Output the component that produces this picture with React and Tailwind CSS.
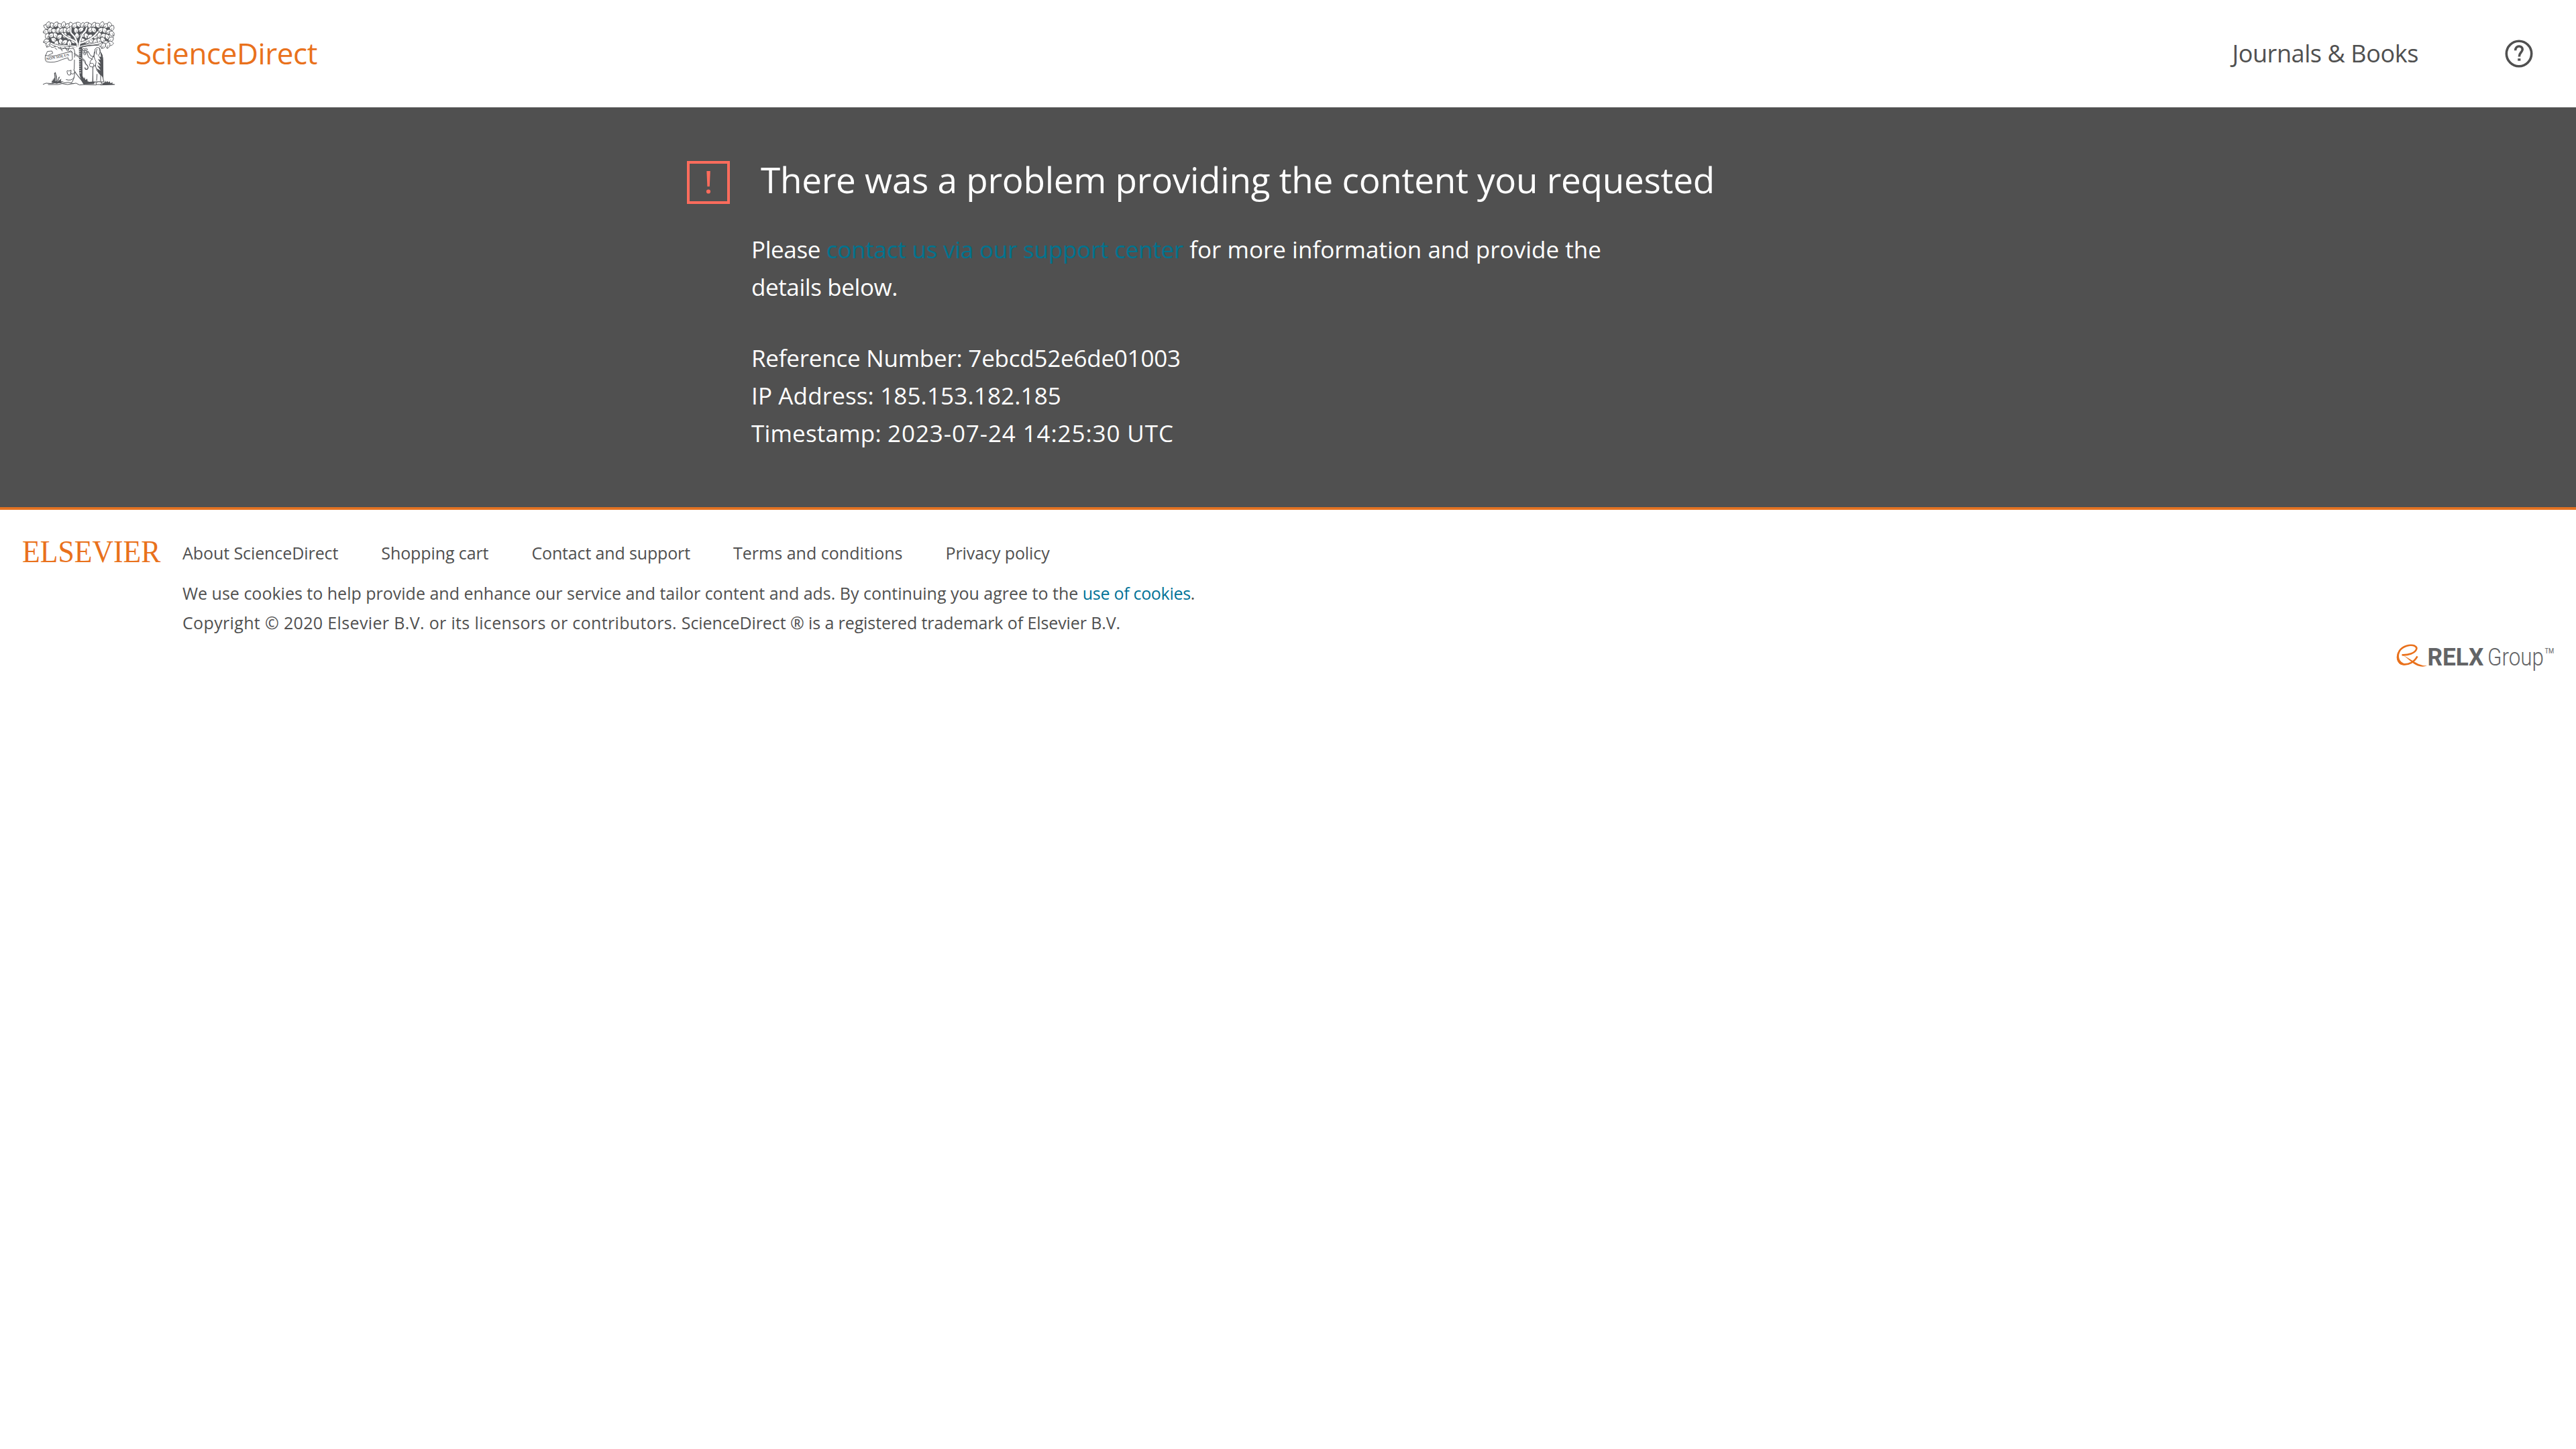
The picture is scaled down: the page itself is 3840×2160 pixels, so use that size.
const INK = '#54565a';

// Leaves of the canopy: x, y, rotation in degrees
const leaves = [
  [58, 60, -60], [66, 50, 20], [84, 54, -25], [100, 50, 35], [118, 56, -40], [134, 50, 15], [152, 56, 50], [168, 52, -20], [184, 54, 35], [202, 50, -45], [220, 54, 10], [236, 50, 50], [252, 56, -30], [270, 52, 25], [288, 54, -50], [306, 50, 20], [324, 56, 60], [340, 52, -15], [350, 66, 30],
  [56, 82, 80], [74, 74, 30], [92, 78, -60], [110, 76, 10], [126, 76, 50], [142, 76, -20], [158, 74, 40], [190, 76, -10], [212, 72, 60], [254, 74, 30], [270, 74, -40], [300, 74, 50], [318, 76, -20], [336, 82, 60], [350, 90, -40],
  [62, 102, 10], [80, 98, 60], [98, 98, -30], [116, 104, 50], [140, 98, 10], [158, 108, -40], [194, 100, 0], [218, 98, 60], [236, 100, -20], [252, 104, 40], [276, 104, -50], [294, 98, 10], [312, 100, 60], [330, 104, -30], [346, 116, 50],
  [58, 124, 70], [66, 138, 30], [90, 118, -60], [102, 134, 20], [122, 126, -20], [140, 128, 50], [160, 134, 0], [178, 124, -50], [222, 122, -30], [240, 124, 40], [258, 122, -60], [276, 126, 20], [294, 122, -30], [310, 118, -40], [322, 132, 70], [344, 134, 90], [332, 142, 10], [302, 140, -60], [84, 142, -70], [312, 144, 30],
];

const branches = [
  'M198 160C197 130 190 106 172 92C160 84 170 70 166 62',
  'M203 154C206 120 212 95 232 80L238 64',
  'M196 134C170 108 150 116 128 88',
  'M206 134C235 126 268 110 288 82',
  'M184 155C145 150 110 152 78 134',
  'M212 148C240 138 270 142 300 130',
];

function TreeLogo() {
  return (
    <svg viewBox="42 36 324 288" className="h-24 w-[108px] shrink-0" fill="none" strokeLinecap="round" strokeLinejoin="round">
      <path d="M60 56L90 48L180 46L280 48L342 56L346 80L334 110L340 134L310 140L280 128L250 130L210 146L150 142L110 138L70 136L62 115L64 82Z" fill={INK} />
      {leaves.map(([x, y, r], i) => (
        <g key={i} transform={`translate(${x} ${y}) rotate(${r})`}>
          <path d="M0 14C-14 7-12-7 0-14C12-7 14 7 0 14Z" fill="#fff" stroke={INK} strokeWidth="2.6" />
          <path d="M0 12L1 1" stroke={INK} strokeWidth="2" />
        </g>
      ))}
      <g stroke={INK} strokeWidth="10">
        {branches.map((d) => <path key={d} d={d} />)}
      </g>
      <g stroke="#fff" strokeWidth="6.4">
        {branches.map((d) => <path key={d} d={d} />)}
      </g>
      {/* trunk */}
      <path d="M180 152C188 185 183 225 184 255C180 285 180 302 172 313L228 316C214 292 204 280 203 250L203 150Z" fill="#fff" />
      <path d="M176 154Q186 162 184 184L183 196M183 208L182 250M184 262Q184 296 168 312" stroke={INK} strokeWidth="3" />
      <path d="M203 154Q212 148 218 152L218 190L219 280Q228 302 250 306L276 304L270 316L224 318Q206 290 204 262Z" fill={INK} />
      <path d="M202 162H210M202 170H210M202 178H210M202 186H210M202 196H210M202 206H210M202 216H210M202 226H210M202 236H210M202 246H210M203 256H211M204 266H212" stroke="#fff" strokeWidth="2.6" />
      <path d="M214 150Q250 140 288 142" stroke={INK} strokeWidth="4" />
      {/* vine */}
      <path d="M183 180C198 194 226 200 231 220C232 230 244 230 244 242C242 254 230 252 230 243" stroke={INK} strokeWidth="4" />
      <path d="M184 181C198 195 226 201 231 218" stroke={INK} strokeWidth="6.5" />
      <path d="M184 181C198 195 226 201 231 218" stroke="#fff" strokeWidth="2.4" />
      <path d="M180 252C192 276 212 292 226 316" stroke={INK} strokeWidth="3.2" />
      <path d="M184 262C184 272 170 274 166 266M166 274Q152 282 150 262Q148 252 158 258L168 254L166 272" stroke={INK} strokeWidth="3" />
      <path d="M182 286Q170 304 146 296" stroke={INK} strokeWidth="3" />
      {/* grapes */}
      <g stroke={INK} strokeWidth="2.6" fill="#fff">
        <circle cx="225" cy="162" r="5" /><circle cx="235" cy="161" r="5" /><circle cx="222" cy="172" r="5" />
        <circle cx="232" cy="171" r="5" /><circle cx="239" cy="172" r="4" /><circle cx="229" cy="181" r="4.5" />
      </g>
      {/* old man */}
      <path d="M276 158Q284 148 294 154L298 170Q310 184 310 206L311 290L314 306H266L265 240L252 218L262 202L272 184Z" fill="#fff" stroke={INK} strokeWidth="3" />
      <path d="M298 170Q310 182 311 210L312 296Q308 280 292 268L282 246L300 256L284 232L300 240L286 218L300 224L288 204L300 208L292 192L302 194Z" fill={INK} />
      <path d="M238 174L246 196L264 206M244 170L256 190L270 194M272 172Q266 194 280 216L276 236M284 160Q276 176 284 184M254 224L264 240L276 232L284 256L300 276V302M266 240L264 306M284 272L282 300M296 156Q302 172 290 190" stroke={INK} strokeWidth="3" />
      <path d="M250 226Q262 218 270 228L266 240L254 238Z" fill="#fff" stroke={INK} strokeWidth="2.6" />
      <path d="M280 308Q292 302 306 308L302 318H282Z" fill="#fff" stroke={INK} strokeWidth="3" />
      {/* foliage over the banner */}
      <path d="M110 154L124 160L140 156L156 160M120 150L128 168M140 150L150 166M160 152L154 168M96 154L104 162" stroke={INK} strokeWidth="3" />
      {/* banner */}
      <path d="M54 188Q86 196 122 182L158 172L172 172L174 206Q166 214 156 208L154 198L128 206Q92 224 58 216Q48 206 54 188ZM54 188L62 170L82 168L86 178L68 186M174 174L166 166L156 174" fill="#fff" stroke={INK} strokeWidth="2.8" />
      <text x="58" y="210" fontSize="17" fontWeight="700" fontFamily="Liberation Serif, serif" fill={INK} textLength="104" lengthAdjust="spacingAndGlyphs" transform="rotate(-11 58 210)">
        NON SOLUS
      </text>
      {/* ground */}
      <path d="M43 317L56 312L84 314L104 308L128 312L156 308L178 314M66 318H110L128 314L152 318L190 312L206 320L226 318" stroke={INK} strokeWidth="3" />
      <path d="M80 310L86 292L84 304L94 286L92 268L98 262L104 282L103 304L112 286L118 282L112 302L124 292L122 304L136 304L120 310L104 314Z" fill={INK} />
      <path d="M97 272L98 302M114 290L108 304" stroke="#fff" strokeWidth="2" />
      <path d="M306 314L318 308L320 300L324 308L330 302L334 308L340 304L344 312L354 308L352 314L366 317L310 321Z" fill={INK} />
      <path d="M218 286L224 296L228 284L232 298L240 292L242 304L222 304Z" fill={INK} />
      <path d="M226 318L280 320M300 320L362 318" stroke={INK} strokeWidth="3" />
    </svg>
  );
}

function HelpIcon() {
  return (
    <svg viewBox="0 0 42 42" className="h-[42px] w-[42px]" fill="none" stroke="#505050">
      <circle cx="21" cy="21" r="18.7" strokeWidth="3.6" />
      <path d="M15.6 16.2C15.8 8 26.4 8.4 26.2 14.8C26 19.4 21.4 19 21.4 25.4" strokeWidth="3.6" />
      <path d="M19.2 28.2h4.2v3.4h-4.2z" fill="#505050" stroke="none" />
    </svg>
  );
}

function Header() {
  return (
    <header className="flex h-40 items-center justify-between px-16">
      <a className="flex items-center">
        <TreeLogo />
        <span className="ml-[30px] pb-[2px] text-[44px] leading-[64px] tracking-[-0.4px] text-[#e9711c]">ScienceDirect</span>
      </a>
      <nav className="flex items-center">
        <a className="text-[36px] leading-[48px] tracking-[-0.4px]">Journals &amp; Books</a>
        <a className="ml-[129px]">
          <HelpIcon />
        </a>
      </nav>
    </header>
  );
}

function AlertIcon() {
  return (
    <svg viewBox="0 0 64 64" className="h-16 w-16 shrink-0">
      <rect x="2" y="2" width="60" height="60" fill="none" stroke="#ff6c5c" strokeWidth="4" />
      <path d="M29.4 15h5.4l-1 23h-3.4z" fill="#ff6c5c" />
      <circle cx="32" cy="45.5" r="3.1" fill="#ff6c5c" />
    </svg>
  );
}

function ErrorPanel() {
  return (
    <main className="h-[596px] bg-[#505050] pl-[1024px] pt-20 text-white">
      <div className="flex items-start gap-[46px]">
        <AlertIcon />
        <h1 className="whitespace-nowrap text-[53px] leading-[56px] tracking-[-0.26px]">
          There was a problem providing the content you requested
        </h1>
      </div>
      <div className="ml-24 mt-10 whitespace-nowrap text-[35px] leading-[56px]">
        <p>
          <span className="tracking-[-0.4px]">Please </span>
          <a className="tracking-[-0.22px] text-[#00738e]">contact us via our support center</a>{' '}
          <span className="tracking-[0.01px]">for more information and provide the</span>
          <br />
          <span className="tracking-[-0.4px]">details below.</span>
        </p>
        <div className="mt-[50px]">
          <p className="tracking-[-0.23px]">Reference Number: 7ebcd52e6de01003</p>
          <p className="tracking-[0.14px]">IP Address: 185.153.182.185</p>
          <p>
            <span className="tracking-[0.2px]">Timestamp: </span>
            <span className="tracking-[0.9px]">2023-07-24 14:25:30 UTC</span>
          </p>
        </div>
      </div>
    </main>
  );
}

function RelxLogo() {
  return (
    <svg viewBox="0 0 236 44" className="h-11 w-[236px]" fontFamily="Roboto, sans-serif">
      <path
        d="M8.5 18.3C13 18.5 18 18 22 16.500C30 13.500 33 7.500 27.500 4.800C21 2 10 5 5 12C-0.500 20.500 2 30.500 10 32.200C19 33.500 27 28.500 31.500 20.300"
        fill="none" stroke="#e9711c" strokeWidth="2.6"
      />
      <path d="M7 9C-1 16-1.500 29 8 33C12 34 15 33 17 32C9 31.500 4 27 4 20C4 15 6 11 10 7.500Z" fill="#e9711c" />
      <path d="M8.500 17.800C15 21 20 24.500 26 28C33 32 39 34.800 46 34.300C41 36.500 35 36 29 33C21 28.500 16 22 8.500 17.800Z" fill="#e9711c" />
      <text transform="translate(46.500 33.700) scale(0.965 1)" fontSize="36.500" fontWeight="700" fill="#636466">RELX</text>
      <text transform="translate(136 33.700) scale(0.86 1)" fontSize="36.500" fontWeight="300" fill="#636466">Group</text>
      <text transform="translate(221.500 15.700) scale(0.85 1)" fontSize="11" fontWeight="400" fill="#636466">TM</text>
    </svg>
  );
}

function Footer() {
  return (
    <footer className="border-t-4 border-[#e37222] pl-[33px] pr-8 pt-[42px] text-[25px]">
      <div className="flex items-start">
        <div className="w-[239px] shrink-0">
          <span className="inline-block origin-left scale-x-[0.93] font-['Liberation_Serif',serif] text-[47px] leading-[40px] text-[#e9711c]">
            ELSEVIER
          </span>
        </div>
        <div className="whitespace-nowrap">
          <nav className="flex gap-16 pt-[2px] leading-[40px]">
            <a className="tracking-[-0.08px]">About ScienceDirect</a>
            <a className="tracking-[-0.1px]">Shopping cart</a>
            <a className="tracking-[-0.15px]">Contact and support</a>
            <a className="tracking-[0.03px]">Terms and conditions</a>
            <a className="tracking-[-0.1px]">Privacy policy</a>
          </nav>
          <p className="mt-[18px] leading-[44px]">
            We use cookies to help provide and enhance our service and tailor content and ads. By continuing you agree to the{' '}
            <a className="tracking-[-0.3px] text-[#007398]">use of cookies</a>.
          </p>
          <p className="leading-[44px]">
            <span className="tracking-[0.35px]">
              Copyright © 2020 Elsevier B.V. or its licensors or contributors.{' '}
            </span>
            <span className="tracking-[-0.1px]">ScienceDirect ® is a registered trademark of Elsevier B.V.</span>
          </p>
        </div>
      </div>
      <div className="flex justify-end pt-2">
        <RelxLogo />
      </div>
    </footer>
  );
}

export default function App() {
  return (
    <div className="min-h-screen w-full bg-white font-['Open_Sans',sans-serif] text-[#505050]">
      <Header />
      <ErrorPanel />
      <Footer />
    </div>
  );
}
